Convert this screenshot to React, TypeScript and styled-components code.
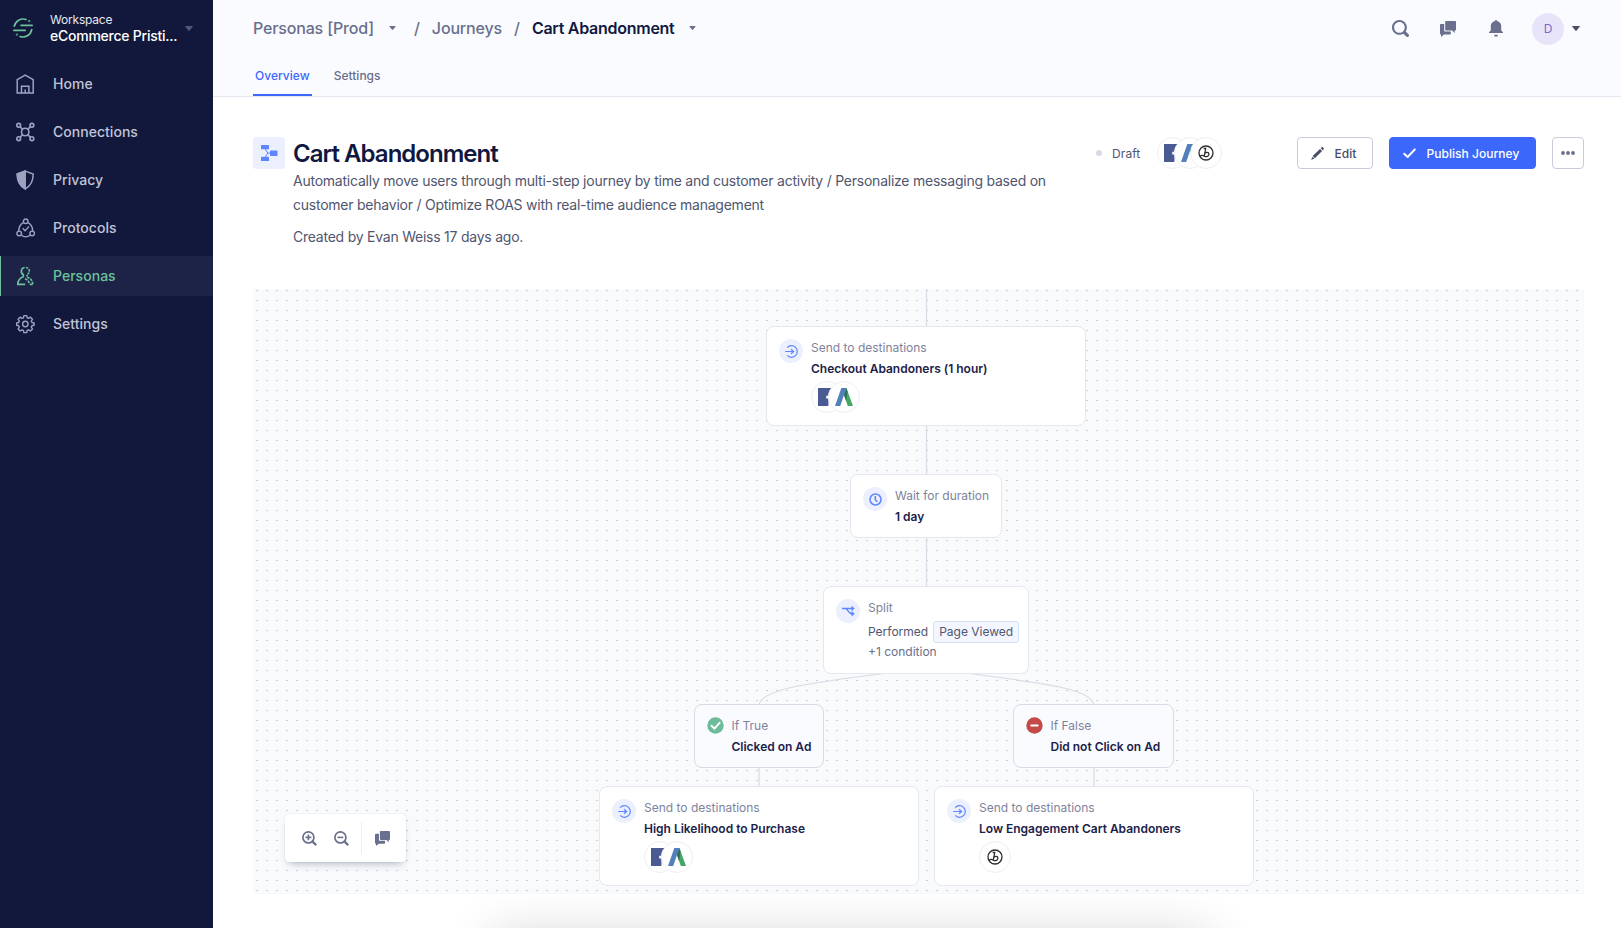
import React from "react";
import styled, { createGlobalStyle, css } from "styled-components";

const GlobalStyle = createGlobalStyle`
  *, *::before, *::after { box-sizing: border-box; }
  html, body { margin: 0; padding: 0; overflow: hidden; }
  body {
    background: #fff;
    font-family: Inter, "Liberation Sans", sans-serif;
    font-size: 14px;
    color: #50566f;
  }
  svg { display: block; flex: none; }
  button { font-family: inherit; }
`;

/* ---------- shell ---------- */

const Shell = styled.div`
  display: flex;
  width: 100%;
  height: 928px;
  overflow: hidden;
  position: relative;
`;

const Sidebar = styled.nav`
  width: 213px;
  flex: none;
  background: #11183c;
  display: flex;
  flex-direction: column;
`;

const Workspace = styled.div`
  height: 64px;
  display: flex;
  padding: 13px 19px 0 13px;
  color: #fff;
`;

const WorkspaceText = styled.div`
  margin-left: 17px;
  width: 135px;
  white-space: nowrap;
`;

const WorkspaceLabel = styled.div`
  font-size: 12px;
  line-height: 14px;
  letter-spacing: -0.2px;
  color: #e6e8f0;
`;

const WorkspaceName = styled.div`
  font-size: 14px;
  line-height: 18px;
  letter-spacing: -0.24px;
  font-weight: 500;
`;

const LogoBox = styled.div`
  padding-top: 5px;
  width: 20px;
`;

const CaretBox = styled.div`
  padding-top: 13px;
`;

const NavItem = styled.a<{ $active?: boolean }>`
  height: 40px;
  margin-bottom: 8px;
  display: flex;
  align-items: center;
  padding-left: 16px;
  font-size: 14px;
  font-weight: 500;
  letter-spacing: 0.03px;
  color: ${(p) => (p.$active ? "#6cc19a" : "#c1c4d6")};
  ${(p) =>
    p.$active &&
    css`
      background: #1c2346;
      box-shadow: inset 1px 0 0 #6cc19a;
    `}
  svg {
    width: 19px;
    height: 20px;
    margin-right: 18px;
    color: ${(p) => (p.$active ? "#6cc19a" : "#9ca2c0")};
  }
`;

const NavLabel = styled.span`
  padding-bottom: 2px;
`;

const Main = styled.main`
  flex: 1;
  min-width: 0;
  display: flex;
  flex-direction: column;
`;

/* ---------- top bar ---------- */

const TopBar = styled.header`
  height: 97px;
  flex: none;
  background: #fafbff;
  border-bottom: 1px solid #e6e8f0;
  padding: 0 41px 0 40px;
  display: flex;
  flex-direction: column;
  justify-content: space-between;
`;

const TopRow = styled.div`
  height: 57px;
  display: flex;
  align-items: center;
  justify-content: space-between;
`;

const Crumbs = styled.div`
  display: flex;
  align-items: center;
  padding-bottom: 2px;
  font-size: 16px;
  font-weight: 500;
  color: #696f8c;
  white-space: nowrap;
`;

const Crumb = styled.span<{ $current?: boolean }>`
  color: ${(p) => (p.$current ? "#101840" : "#696f8c")};
  font-weight: ${(p) => (p.$current ? 600 : 500)};
  letter-spacing: ${(p) => (p.$current ? -0.27 : -0.16)}px;
`;

const Slash = styled.span`
  margin: 0 12px;
`;

const CrumbCaret = styled.span<{ $right?: number }>`
  margin: 0 ${(p) => p.$right ?? 0}px 0 15px;
`;

const TopActions = styled.div`
  display: flex;
  align-items: center;
  color: #696f8c;
`;

const TopIcon = styled.span`
  width: 48px;
  display: flex;
  justify-content: center;
`;

const Avatar = styled.span`
  width: 32px;
  height: 32px;
  margin: 0 8px 0 12px;
  border-radius: 50%;
  background: #e7e4f9;
  color: #7b6bc4;
  font-size: 12px;
  display: flex;
  align-items: center;
  justify-content: center;
`;

const Tabs = styled.div`
  display: flex;
  gap: 20px;
`;

const Tab = styled.a<{ $active?: boolean }>`
  height: 32px;
  padding: 3px 2px 0;
  font-size: 12px;
  line-height: 18px;
  letter-spacing: 0.02px;
  font-weight: 500;
  color: ${(p) => (p.$active ? "#3b68fb" : "#696f8c")};
  border-bottom: 2px solid ${(p) => (p.$active ? "#3b68fb" : "transparent")};
`;

/* ---------- journey heading ---------- */

const Heading = styled.section`
  height: 192px;
  flex: none;
  padding: 40px 37px 0 40px;
  display: flex;
  align-items: flex-start;
`;

const JourneyBadge = styled.div`
  width: 32px;
  height: 32px;
  border-radius: 4px;
  background: #ebeffe;
  display: flex;
  align-items: center;
  justify-content: center;
`;

const HeadingText = styled.div`
  width: 780px;
  margin-left: 8px;
`;

const Title = styled.h1`
  margin: 0;
  padding-top: 2px;
  font-size: 24px;
  line-height: 30px;
  font-weight: 600;
  letter-spacing: -0.97px;
  color: #101840;
`;

const Description = styled.p`
  margin: 0 0 8px;
  line-height: 24px;
  white-space: pre-line;
  letter-spacing: -0.235px;
`;

const Status = styled.div`
  width: 61px;
  height: 32px;
  display: flex;
  align-items: center;
  font-size: 12px;
  letter-spacing: 0.1px;
  margin-left: 23px;
  gap: 10px;
  &::before {
    content: "";
    width: 6px;
    height: 6px;
    border-radius: 50%;
    background: #d8dae5;
  }
`;

const Logos = styled.div`
  display: flex;
`;

const LogoCircle = styled.span`
  width: 32px;
  height: 32px;
  border-radius: 50%;
  border: 1px solid #edeff5;
  background: #fff;
  display: flex;
  align-items: center;
  justify-content: center;
  & + & {
    margin-left: -15.5px;
  }
`;

const Buttons = styled.div`
  margin-left: auto;
  display: flex;
  gap: 16px;
`;

const Button = styled.button<{ $primary?: boolean; $width: number; $labelled?: boolean }>`
  width: ${(p) => p.$width}px;
  height: 32px;
  padding: 0 ${(p) => (p.$labelled ? 3 : 0)}px 0 0;
  display: flex;
  align-items: center;
  justify-content: center;
  gap: ${(p) => (p.$labelled ? 11 : 0)}px;
  font-size: 12px;
  font-weight: 500;
  letter-spacing: 0.03px;
  border-radius: 4px;
  border: 1px solid ${(p) => (p.$primary ? "#3b68fb" : "#c9cbdc")};
  background: ${(p) => (p.$primary ? "#3b68fb" : "#fff")};
  color: ${(p) => (p.$primary ? "#fff" : "#474d66")};
`;

/* ---------- canvas ---------- */

const Canvas = styled.section`
  position: relative;
  width: 1331px;
  height: 605px;
  flex: none;
  margin-left: 40px;
  overflow: hidden;
  background-color: #f9fafc;
  background-image: radial-gradient(ellipse 1.3px 0.9px at 4px 1.5px, #cccfd7 60%, transparent 100%);
  background-size: 10px 10px;
`;

const Wires = styled.svg`
  position: absolute;
  inset: 0;
`;

const Node = styled.div<{ $x: number; $y: number; $w: number; $h: number; $branch?: boolean }>`
  position: absolute;
  left: ${(p) => p.$x}px;
  top: ${(p) => p.$y}px;
  width: ${(p) => p.$w}px;
  height: ${(p) => p.$h}px;
  padding: 12px;
  display: flex;
  gap: ${(p) => (p.$branch ? 7.5 : 8)}px;
  border: 1px solid ${(p) => (p.$branch ? "#d8dae5" : "#e6e8f0")};
  border-radius: 8px;
  background: ${(p) => (p.$branch ? "#fafbff" : "#fff")};
  white-space: nowrap;
`;

const NodeIcon = styled.span`
  width: 24px;
  height: 24px;
  flex: none;
  border-radius: 50%;
  background: #ebeffe;
  color: #5c85ff;
  display: flex;
  align-items: center;
  justify-content: center;
`;

const NodeKind = styled.div`
  font-size: 12px;
  line-height: 18px;
  letter-spacing: 0;
  color: #7e839c;
`;

const NodeTitle = styled.div`
  margin-top: 3px;
  font-size: 12px;
  line-height: 18px;
  font-weight: 600;
  letter-spacing: -0.01px;
  color: #1b2249;
`;

const NodeLogos = styled(Logos)`
  margin-top: 3px;
`;

const Condition = styled.div`
  display: flex;
  align-items: center;
  gap: 5px;
  margin-top: 4px;
  font-size: 12px;
  line-height: 20px;
  color: #50566f;
`;

const EventTag = styled.span`
  height: 22px;
  padding: 0 5px;
  border: 1px solid #d6e0f5;
  border-radius: 3px;
  background: #f3f6ff;
`;

const Extra = styled.div`
  font-size: 12px;
  line-height: 18px;
  color: #696f8c;
`;

const ZoomBar = styled.div`
  position: absolute;
  left: 32px;
  bottom: 32px;
  width: 121px;
  height: 48px;
  padding: 0 15px 0 17px;
  display: flex;
  align-items: center;
  border-radius: 4px;
  background: #fff;
  color: #696f8c;
  box-shadow: 0 0 1px rgba(67, 90, 111, 0.3), 0 5px 8px -4px rgba(67, 90, 111, 0.47);
`;

const ZoomButton = styled.span`
  width: 16px;
  display: flex;
  & + & {
    margin-left: 16px;
  }
`;

const ZoomDivider = styled.span`
  width: 1px;
  height: 32px;
  margin: 0 13px 0 11px;
  background: #edeff5;
`;

const BottomShadow = styled.div`
  position: absolute;
  left: 492px;
  bottom: -52px;
  width: 716px;
  height: 44px;
  box-shadow: 0 0 50px rgba(0, 0, 0, 0.19);
`;

/* ---------- drawings ---------- */

const Caret = ({ w = 8, h = 5, color = "#696f8c" }: { w?: number; h?: number; color?: string }) => (
  <svg width={w} height={h} viewBox="0 0 8 5">
    <path d="M.7 0h6.6a.5.5 0 0 1 .4.8L4.4 4.7a.5.5 0 0 1-.8 0L.3.8A.5.5 0 0 1 .7 0z" fill={color} />
  </svg>
);

const SegmentLogo = () => (
  <svg width="20" height="20" viewBox="0 0 20 20" fill="none" stroke="#6cc19a" strokeWidth="1.7" strokeLinecap="round">
    <path d="M8 7.3h11.2M.8 12.4h11.4" />
    <path d="M1.3 8.2A9 9 0 0 1 13 1.5" />
    <path d="M18.7 11.6A9 9 0 0 1 7 18.5" />
    <circle cx="16.2" cy="3.2" r=".3" />
    <circle cx="3.9" cy="16.7" r=".3" />
  </svg>
);

const line = { fill: "none", stroke: "currentColor", strokeWidth: 1.5 };

const HomeIcon = () => (
  <svg viewBox="0 0 19 20" {...line}>
    <path d="M1.2 19V5.6L9.2 1.2l8 4.4V19z" />
    <path d="M5.500 19v-6.700h7.400V19M9.200 15.500V19" />
  </svg>
);

const ConnectionsIcon = () => (
  <svg viewBox="0 0 19 20" {...line} strokeWidth={1.6}>
    <circle cx="9.2" cy="10" r="3.7" />
    <circle cx="2.7" cy="3.300" r="1.900" />
    <circle cx="15.900" cy="3.300" r="1.900" />
    <circle cx="2.700" cy="16.700" r="1.900" />
    <circle cx="15.900" cy="16.700" r="1.900" />
    <path d="M4 4.700 6.700 7.400M14.600 4.700 11.700 7.400M4 15.300 6.700 12.600M14.600 15.300 11.700 12.600" />
  </svg>
);

const PrivacyIcon = () => (
  <svg viewBox="0 0 19 20" {...line}>
    <path d="M9.200 1.100 17.200 4c0 7-2.300 11.800-8 14.900C3.500 15.800 1.200 11 1.200 4z" />
    <path d="M9.200 1.100V18.900C3.500 15.800 1.200 11 1.200 4z" fill="currentColor" />
  </svg>
);

const ProtocolsIcon = () => (
  <svg viewBox="0 0 19 20" {...line} strokeWidth={1.4}>
    <circle cx="9.700" cy="3.300" r="2.300" />
    <circle cx="3.200" cy="15.400" r="2.300" />
    <circle cx="16.200" cy="15.400" r="2.300" />
    <path d="M7.400 4.600C4.500 6 2.800 9 2.700 12.900M12 4.600c2.900 1.400 4.600 4.400 4.700 8.300M5.200 17.200c2.600 1.900 6.400 1.900 9 0" />
    <path d="m6.700 10.300 2.400 2.400 3.900-4.300" />
  </svg>
);

const PersonasIcon = () => (
  <svg viewBox="0 0 19 20" {...line} strokeWidth={1.7}>
    <path d="M8.600 1.500C4.500 2 4.500 7.400 7.300 8.500v2.300C4 12 1.900 14.500 1.800 18.400h7.400" />
    <path d="M9.900 1.500C14.200 2 14.200 7.300 11 8.600v1.900" strokeDasharray="2.400 1" />
    <path d="M11.200 11.200c3 .9 5.200 3.200 5.600 7" strokeDasharray="2.600 1" />
    <path d="M9 12.800c2.600 1 4.300 3 4.500 5.600M14 18.400h3" strokeDasharray="2.600 1" />
  </svg>
);

const SettingsIcon = () => (
  <svg viewBox="0 0 19 20" {...line} strokeWidth={1.4} strokeLinejoin="round">
    <circle cx="9.300" cy="10" r="2.700" />
    <path d="M7.900 1.600h2.800l.5 2.200 1.400.6 1.900-1.200 2 2-1.200 1.900.6 1.400 2.200.5v2.200l-2.200.5-.6 1.400 1.200 1.900-2 2-1.900-1.200-1.400.6-.5 2.200H7.900l-.5-2.200-1.400-.6L4.100 17l-2-2 1.200-1.900-.6-1.400-2.200-.5V9l2.200-.5.600-1.400-1.200-1.900 2-2 1.900 1.200 1.400-.6z" />
  </svg>
);

const SearchIcon = () => (
  <svg width="17" height="17" viewBox="0 0 16 16">
    <path
      fill="currentColor"
      fillRule="evenodd"
      d="M15.550 13.430l-2.670-2.680a6.940 6.940 0 0 0 1.110-3.760c0-3.870-3.130-7-7-7s-7 3.130-7 7 3.130 7 7 7c1.390 0 2.680-.42 3.760-1.110l2.680 2.670a1.498 1.498 0 1 0 2.120-2.120zm-8.560-1.440c-2.760 0-5-2.240-5-5s2.240-5 5-5 5 2.240 5 5-2.240 5-5 5z"
    />
  </svg>
);

const ChatIcon = ({ size = 16 }: { size?: number }) => (
  <svg width={size} height={size} viewBox="0 0 16 16" fill="currentColor">
    <path d="M15 0H6.200c-.6 0-1 .4-1 1v7.500c0 .6.400 1 1 1h6L14.600 12V9.500h.4c.6 0 1-.4 1-1V1c0-.6-.4-1-1-1z" />
    <path d="M4.200 3H1C.4 3 0 3.400 0 4v8.500c0 .6.400 1 1 1V16l3-2.500h5.800c.6 0 1-.4 1-1v-2H5.200c-.6 0-1-.4-1-1z" />
  </svg>
);

const BellIcon = () => (
  <svg width="16" height="17" viewBox="0 0 16 17" fill="currentColor">
    <path d="M8 .3c.8 0 1.400.4 1.500 1 2.300.6 3.700 2.300 3.700 4.500v4.800l1.700 1.300c.3.400.1 1.100-.5 1.100H1.600c-.6 0-.8-.7-.5-1.100l1.700-1.300V5.800c0-2.200 1.400-3.900 3.700-4.500C6.600.7 7.200.3 8 .3z" />
    <path d="M6 14.700h4a2 2 0 0 1-4 0z" />
  </svg>
);

const JourneyIcon = () => (
  <svg width="17" height="16" viewBox="0 0 17 16" fill="#5c85ff">
    <rect x="0" y="0" width="8" height="4.300" rx=".6" />
    <rect x="0" y="11.700" width="8" height="4.300" rx=".6" />
    <rect x="9" y="5.400" width="7.500" height="5.500" rx=".6" />
    <path d="M4 3.500 6.800 8.100 4 12.500M6.500 8.100h3" fill="none" stroke="#5c85ff" strokeWidth="1" />
  </svg>
);

const PencilIcon = () => (
  <svg width="13" height="13" viewBox="0 0 13 13" fill="currentColor">
    <path d="M9 1.900 11.100 4l-7.300 7.200L1.700 9.100zM9.700 1.200l.8-.8c.4-.4 1-.4 1.400 0l.7.700c.4.400.4 1 0 1.400l-.8.800zM1.300 9.700l2 2L.2 12.800z" />
  </svg>
);

const CheckIcon = () => (
  <svg width="13" height="11" viewBox="0 0 13 11" fill="none" stroke="currentColor" strokeWidth="1.900" strokeLinecap="round" strokeLinejoin="round">
    <path d="M1.200 5.700 4.600 9 11.800 1.500" />
  </svg>
);

const MoreIcon = () => (
  <svg width="14" height="4" viewBox="0 0 14 4" fill="#696f8c">
    <circle cx="2" cy="2" r="1.900" />
    <circle cx="7" cy="2" r="1.900" />
    <circle cx="12" cy="2" r="1.900" />
  </svg>
);

const FacebookLogo = () => (
  <svg width="18" height="18" viewBox="0 0 18 18">
    <path d="M0 0h18v18h-5v-7h2.300l.4-2.700H13V6.600c0-.8.300-1.300 1.400-1.300h1.400V2.900c-3.500-.6-5.400.7-5.400 3.500v1.300H8.200v2.800h2.200V18H0z" fill="#4a5b94" />
  </svg>
);

const AdwordsLogo = () => (
  <svg width="18" height="18" viewBox="0 0 18 18">
    <path d="M6.600 0h4.800L18 18h-5.200L9 7z" fill="#46a567" />
    <path d="M11.400 0 9 7l2 6 1.500-9.500z" fill="#2f6f56" />
    <path d="M6.300 0h5.100L5.200 18H0z" fill="#5280bd" />
  </svg>
);

const BrazeLogo = () => (
  <svg width="16" height="16" viewBox="0 0 16 16" fill="none" stroke="#2c2c2c" strokeWidth="1.300">
    <circle cx="8" cy="8" r="7" />
    <path d="M5.700 3.500h2L6.300 11" />
    <path d="M6.700 8.400c1.200-1.300 4-1.500 4.200.5.200 2.200-2.300 3.500-4.500 2.300-1.600-1.200-3.400-.9-4.500.3" />
  </svg>
);

const SendIcon = () => (
  <svg width="13" height="13" viewBox="0 0 13 13" fill="none" stroke="currentColor" strokeWidth="1.200">
    <path d="M2.200 2.600a5.800 5.800 0 1 1 0 7.800" />
    <path d="M.2 6.500h7.300M6 4.200l2.600 2.300L6 8.800" />
  </svg>
);

const ClockIcon = () => (
  <svg width="13" height="13" viewBox="0 0 13 13" fill="none" stroke="currentColor" strokeWidth="1.500">
    <circle cx="6.500" cy="6.500" r="5.500" />
    <path d="M6.300 3v3.700l2 2" />
  </svg>
);

const SplitIcon = () => (
  <svg width="13" height="12" viewBox="0 0 13 12" fill="none" stroke="currentColor" strokeWidth="1.400">
    <path d="M0 3.500h10.500M3.500 3.500c2 0 3 5.300 6.500 5.300h.5" />
    <path d="M9.800 1.300v4.400l2.600-2.200zM9.800 6.600V11l2.600-2.200z" fill="currentColor" strokeWidth=".5" />
  </svg>
);

const TrueIcon = () => (
  <svg width="17" height="17" viewBox="0 0 17 17">
    <circle cx="8.500" cy="8.500" r="8.200" fill="#6dbb98" />
    <path d="m4.500 8.800 2.900 2.800 5.200-5.800" fill="none" stroke="#fff" strokeWidth="2" strokeLinecap="round" />
  </svg>
);

const FalseIcon = () => (
  <svg width="17" height="17" viewBox="0 0 17 17">
    <circle cx="8.500" cy="8.500" r="8.200" fill="#c34a48" />
    <rect x="4.300" y="7.400" width="8.400" height="2.200" rx="1" fill="#fff" />
  </svg>
);

const ZoomIcon = ({ plus }: { plus?: boolean }) => (
  <svg width="15" height="15" viewBox="0 0 15 15" fill="none" stroke="currentColor">
    <circle cx="6.400" cy="6.400" r="5.500" strokeWidth="1.700" />
    <path d="m10.500 10.500 3 3" strokeWidth="2.400" strokeLinecap="round" />
    <path d={plus ? "M3.500 6.400h5.800M6.400 3.500v5.800" : "M3.500 6.400h5.800"} strokeWidth="1.600" />
  </svg>
);

const navItems = [
  { label: "Home", Icon: HomeIcon },
  { label: "Connections", Icon: ConnectionsIcon },
  { label: "Privacy", Icon: PrivacyIcon },
  { label: "Protocols", Icon: ProtocolsIcon },
  { label: "Personas", Icon: PersonasIcon, active: true },
  { label: "Settings", Icon: SettingsIcon },
];

const logoFor = { facebook: FacebookLogo, adwords: AdwordsLogo, braze: BrazeLogo };
type LogoName = keyof typeof logoFor;

const LogoList = ({ names }: { names: LogoName[] }) => (
  <>
    {names.map((name) => {
      const Logo = logoFor[name];
      return (
        <LogoCircle key={name}>
          <Logo />
        </LogoCircle>
      );
    })}
  </>
);

const SendNode = ({ x, y, title, logos }: { x: number; y: number; title: string; logos: LogoName[] }) => (
  <Node $x={x} $y={y} $w={320} $h={100}>
    <NodeIcon>
      <SendIcon />
    </NodeIcon>
    <div>
      <NodeKind>Send to destinations</NodeKind>
      <NodeTitle>{title}</NodeTitle>
      <NodeLogos>
        <LogoList names={logos} />
      </NodeLogos>
    </div>
  </Node>
);

export default function App() {
  return (
    <Shell>
      <GlobalStyle />
      <Sidebar>
        <Workspace>
          <LogoBox>
            <SegmentLogo />
          </LogoBox>
          <WorkspaceText>
            <WorkspaceLabel>Workspace</WorkspaceLabel>
            <WorkspaceName>eCommerce Pristi...</WorkspaceName>
          </WorkspaceText>
          <CaretBox>
            <Caret color="#4b5876" />
          </CaretBox>
        </Workspace>
        {navItems.map(({ label, Icon, active }) => (
          <NavItem key={label} $active={active}>
            <Icon />
            <NavLabel>{label}</NavLabel>
          </NavItem>
        ))}
      </Sidebar>
      <Main>
        <TopBar>
          <TopRow>
            <Crumbs>
              <Crumb>Personas [Prod]</Crumb>
              <CrumbCaret $right={6}>
                <Caret w={7} h={4} />
              </CrumbCaret>
              <Slash>/</Slash>
              <Crumb>Journeys</Crumb>
              <Slash>/</Slash>
              <Crumb $current>Cart Abandonment</Crumb>
              <CrumbCaret>
                <Caret w={7} h={4} />
              </CrumbCaret>
            </Crumbs>
            <TopActions>
              <TopIcon>
                <SearchIcon />
              </TopIcon>
              <TopIcon>
                <ChatIcon />
              </TopIcon>
              <TopIcon>
                <BellIcon />
              </TopIcon>
              <Avatar>D</Avatar>
              <Caret color="#474d66" />
            </TopActions>
          </TopRow>
          <Tabs>
            <Tab $active>Overview</Tab>
            <Tab>Settings</Tab>
          </Tabs>
        </TopBar>
        <Heading>
          <JourneyBadge>
            <JourneyIcon />
          </JourneyBadge>
          <HeadingText>
            <Title>Cart Abandonment</Title>
            <Description>
              {"Automatically move users through multi-step journey by time and customer activity / Personalize messaging based on\ncustomer behavior / Optimize ROAS with real-time audience management"}
            </Description>
            <Description>Created by Evan Weiss 17 days ago.</Description>
          </HeadingText>
          <Status>Draft</Status>
          <Logos>
            <LogoList names={["facebook", "adwords", "braze"]} />
          </Logos>
          <Buttons>
            <Button $width={76} $labelled>
              <PencilIcon />
              Edit
            </Button>
            <Button $primary $width={147} $labelled>
              <CheckIcon />
              Publish Journey
            </Button>
            <Button $width={32}>
              <MoreIcon />
            </Button>
          </Buttons>
        </Heading>
        <Canvas>
          <Wires width="1331" height="605" fill="none" stroke="#d8dae5" strokeWidth="1.200">
            <path d="M673.500 0v300" />
            <path d="M634 384C560 394 509 399 506 416V500" />
            <path d="M713 384C787 394 838 399 841 416V500" />
          </Wires>
          <SendNode x={513} y={37} title="Checkout Abandoners (1 hour)" logos={["facebook", "adwords"]} />
          <Node $x={597} $y={185} $w={152} $h={64}>
            <NodeIcon>
              <ClockIcon />
            </NodeIcon>
            <div>
              <NodeKind>Wait for duration</NodeKind>
              <NodeTitle>1 day</NodeTitle>
            </div>
          </Node>
          <Node $x={570} $y={297} $w={206} $h={88}>
            <NodeIcon>
              <SplitIcon />
            </NodeIcon>
            <div>
              <NodeKind>Split</NodeKind>
              <Condition>
                Performed <EventTag>Page Viewed</EventTag>
              </Condition>
              <Extra>+1 condition</Extra>
            </div>
          </Node>
          <Node $branch $x={441} $y={415} $w={130} $h={64}>
            <TrueIcon />
            <div>
              <NodeKind>If True</NodeKind>
              <NodeTitle>Clicked on Ad</NodeTitle>
            </div>
          </Node>
          <Node $branch $x={760} $y={415} $w={161} $h={64}>
            <FalseIcon />
            <div>
              <NodeKind>If False</NodeKind>
              <NodeTitle>Did not Click on Ad</NodeTitle>
            </div>
          </Node>
          <SendNode x={346} y={497} title="High Likelihood to Purchase" logos={["facebook", "adwords"]} />
          <SendNode x={681} y={497} title="Low Engagement Cart Abandoners" logos={["braze"]} />
          <ZoomBar>
            <ZoomButton>
              <ZoomIcon plus />
            </ZoomButton>
            <ZoomButton>
              <ZoomIcon />
            </ZoomButton>
            <ZoomDivider />
            <ChatIcon size={15} />
          </ZoomBar>
        </Canvas>
      </Main>
      <BottomShadow />
    </Shell>
  );
}
